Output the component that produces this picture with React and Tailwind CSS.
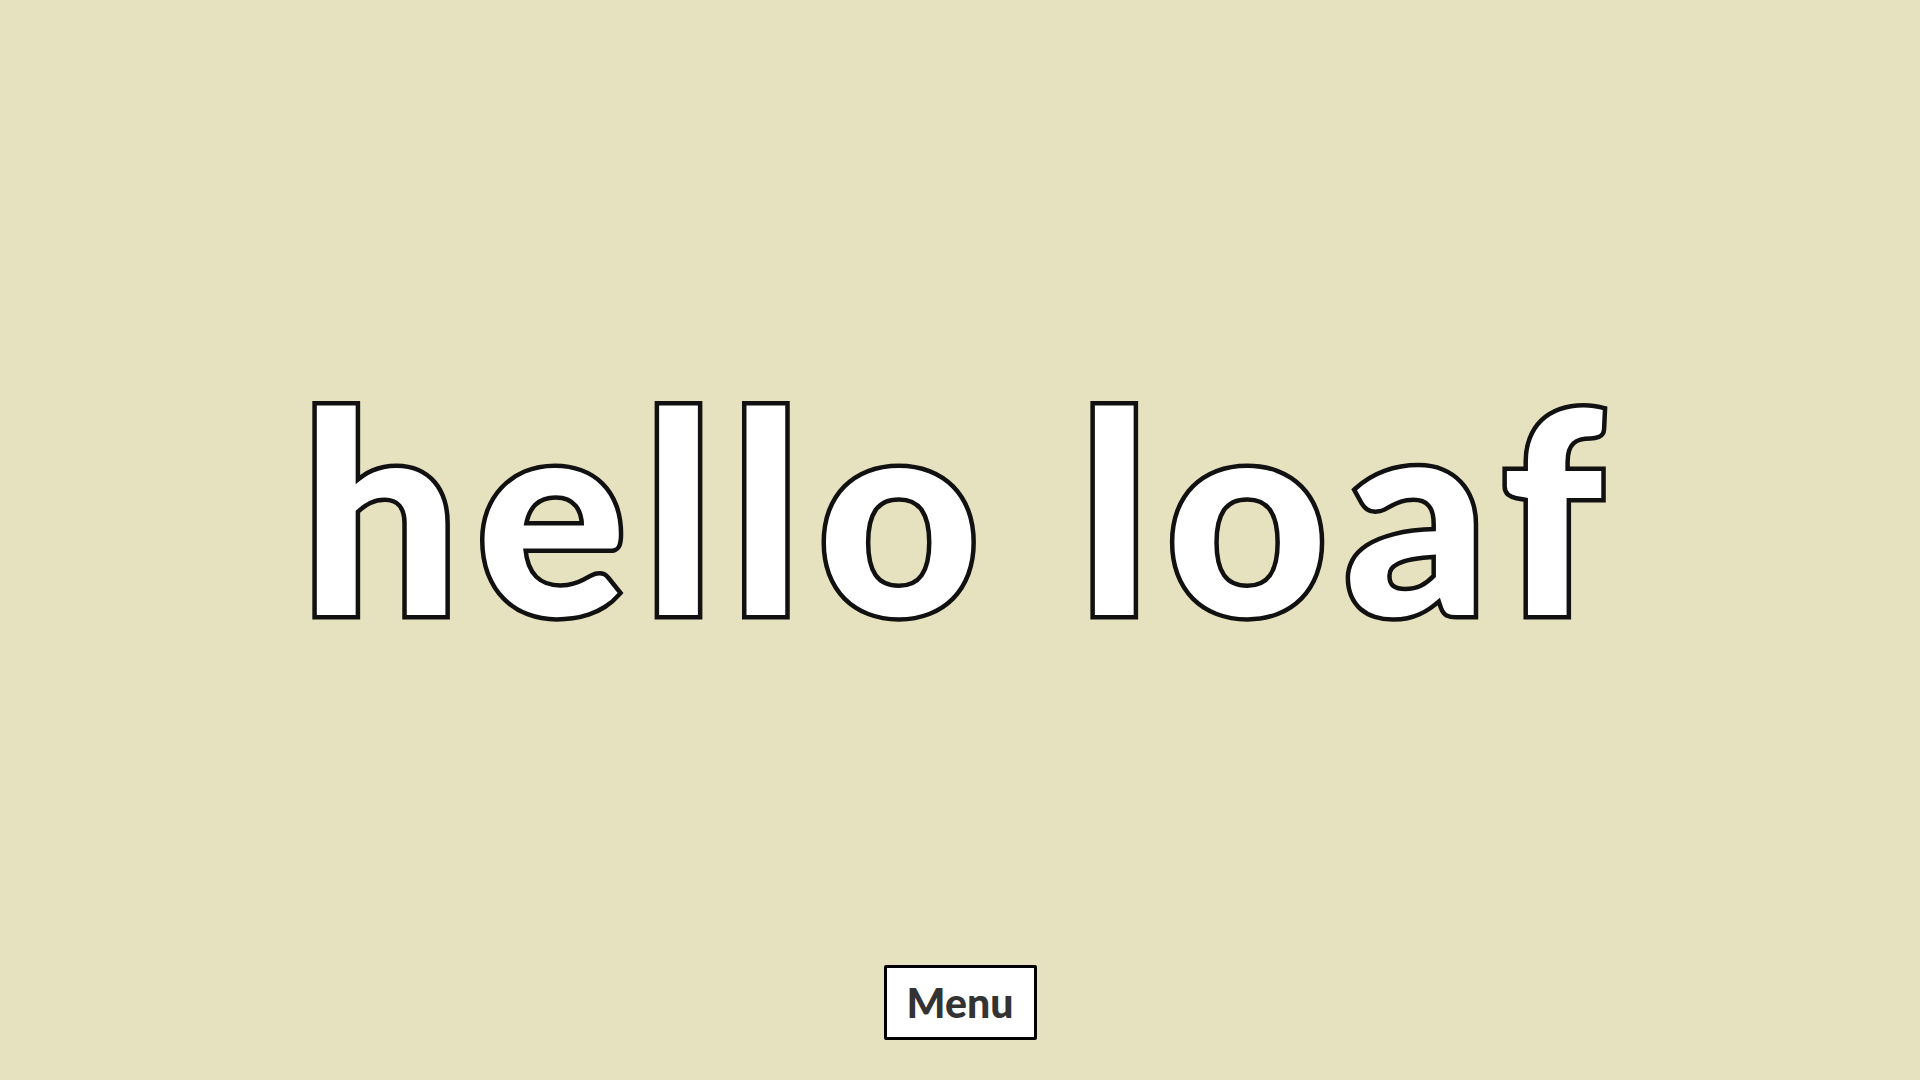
import React from "react";

const App = () => {
  return (
    <div className="h-screen w-full bg-[#e6e1be] flex flex-col items-center font-['Lato','Noto_Sans',sans-serif]">
      {/* Title */}
      <main className="flex-1 flex items-center justify-center">
        <h1 className="mt-12 text-[281px] leading-none font-black text-white tracking-[16px] [-webkit-text-stroke:9px_#111] [paint-order:stroke_fill] select-none">
          hello loaf
        </h1>
      </main>

      {/* Menu */}
      <footer className="pb-10">
        <button className="w-[153px] h-[75px] bg-white border-[3px] border-black rounded-[2px] text-[41px] font-black text-[#333] leading-none">
          Menu
        </button>
      </footer>
    </div>
  );
};

export default App;
